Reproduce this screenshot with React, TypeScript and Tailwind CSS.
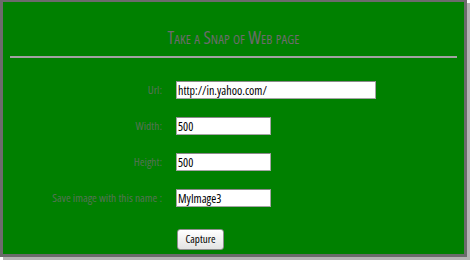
import React, { useState } from 'react';

const narrow = "font-['Open_Sans',sans-serif] font-stretch-condensed";

interface FieldRowProps {
    label: string;
    value: string;
    width: string;
    onChange: (v: string) => void;
}

const FieldRow: React.FC<FieldRowProps> = ({ label, value, width, onChange }) => (
    <div className="flex items-center h-[18px]">
        <label className={`w-[160px] pr-[1px] text-right text-[11.5px] text-[#567356] ${narrow}`}>{label}</label>
        <input
            type="text"
            value={value}
            onChange={(e) => onChange(e.target.value)}
            className={`ml-[13px] h-[18px] ${width} bg-white border border-[#a5a5a5] border-t-[#8a8a8a] px-[1px] text-[12px] leading-[16px] text-black outline-none ${narrow}`}
        />
    </div>
);

export default function App() {
    const [url, setUrl] = useState('http://in.yahoo.com/');
    const [w, setW] = useState('500');
    const [h, setH] = useState('500');
    const [name, setName] = useState('MyImage3');

    return (
        <div className="w-[470px] h-[261px] bg-white">
            <div className="w-[467px] h-[257px] bg-[#008000] border-l-[3px] border-r-[3px] border-t-2 border-b-[3px] border-[#6b6b6b] shadow-[3px_3px_0_#b4b4b4]">
                <h1 className="pt-[25px] h-[47px] text-center text-[18px] leading-[20px] [font-variant:small-caps] text-[#6c6c6c] font-['Open_Sans',sans-serif] font-stretch-condensed">
                    Take a Snap of Web page
                </h1>
                <div className="mt-[7px] mx-[7px] h-[2px] bg-[#a2a2a2]" />

                <form className="mt-[23px] flex flex-col gap-[18px]" onSubmit={(e) => e.preventDefault()}>
                    <FieldRow label="Url:" value={url} width="w-[200px]" onChange={setUrl} />
                    <FieldRow label="Width:" value={w} width="w-[95px]" onChange={setW} />
                    <FieldRow label="Height:" value={h} width="w-[95px]" onChange={setH} />
                    <FieldRow label="Save image with this name :" value={name} width="w-[95px]" onChange={setName} />
                    <div className="pl-[174px]">
                        <button
                            type="submit"
                            className={`w-[47px] h-[21px] rounded-[3px] border border-[#8e8e8e] bg-gradient-to-b from-white to-[#e3e3e3] text-[11px] text-black ${narrow}`}
                        >
                            Capture
                        </button>
                    </div>
                </form>
            </div>
        </div>
    );
}
